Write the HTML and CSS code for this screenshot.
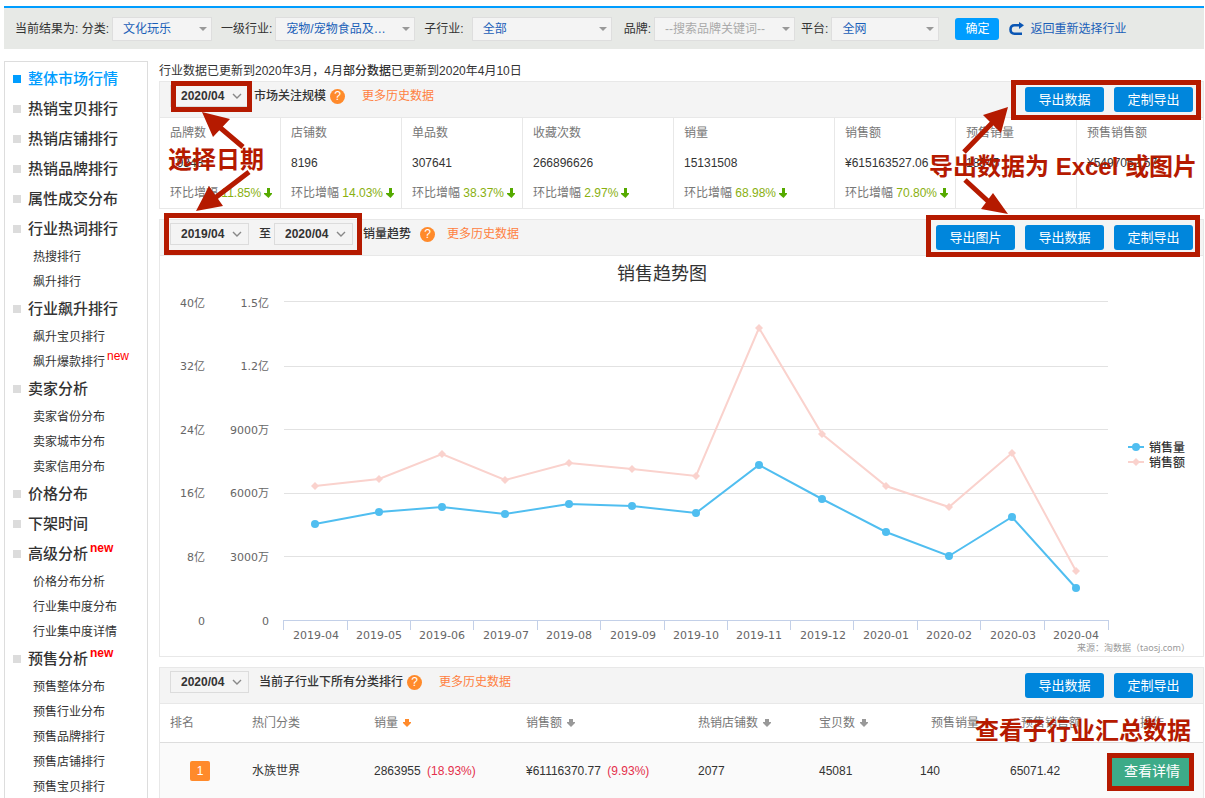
FILE: index.html
```html
<!DOCTYPE html>
<html lang="zh-CN">
<head>
    <title>整体市场行情</title>
    <meta charset="utf-8">
    <meta name="viewport" content="width=device-width, initial-scale=1">

    <link rel="stylesheet" href="styles.css">
</head>

<body>
    <!-- shared icons -->
    <svg class="defs" aria-hidden="true">
        <symbol id="down" viewBox="0 0 8 10"><path d="M3 0h3v5h2v1L4.500 10 0 6V5h3z"/></symbol>
        <symbol id="sort" viewBox="0 0 8 8"><path d="M2 0h4v3h2v1L4 8 0 4V3h2z"/></symbol>
    </svg>

    <form class="filter">
        <label for="cat">当前结果为: 分类:</label>
        <select id="cat" class="f-cat"><option>文化玩乐</option></select>
        <label for="level1">一级行业:</label>
        <select id="level1" class="f-level1"><option>宠物/宠物食品及…</option></select>
        <label for="level2">子行业:</label>
        <select id="level2" class="f-level2"><option>全部</option></select>
        <label for="brand">品牌:</label>
        <input id="brand" class="f-brand" type="text" placeholder="--搜索品牌关键词--">
        <label for="platform">平台:</label>
        <select id="platform" class="f-platform"><option>全网</option></select>
        <button type="button" class="ok">确定</button>
        <a href="#" class="back">
            <svg width="15" height="14" viewBox="0 0 15 14"><path d="M13 11.700H5.500Q1.500 11.700 1.500 7.500T5.500 3.300H10" fill="none" stroke="#0a56b4" stroke-width="2.600"/><path d="M10 0l5 3.300L10 7z" fill="#0a56b4"/></svg>
            返回重新选择行业
        </a>
    </form>

    <div class="page">
        <nav class="side">
            <a href="#" class="item on">整体市场行情</a>
            <a href="#" class="item">热销宝贝排行</a>
            <a href="#" class="item">热销店铺排行</a>
            <a href="#" class="item">热销品牌排行</a>
            <a href="#" class="item">属性成交分布</a>
            <a href="#" class="item">行业热词排行</a>
            <a href="#" class="sub">热搜排行</a>
            <a href="#" class="sub">飙升排行</a>
            <a href="#" class="item">行业飙升排行</a>
            <a href="#" class="sub">飙升宝贝排行</a>
            <a href="#" class="sub">飙升爆款排行<em>new</em></a>
            <a href="#" class="item">卖家分析</a>
            <a href="#" class="sub">卖家省份分布</a>
            <a href="#" class="sub">卖家城市分布</a>
            <a href="#" class="sub">卖家信用分布</a>
            <a href="#" class="item">价格分布</a>
            <a href="#" class="item">下架时间</a>
            <a href="#" class="item">高级分析<em>new</em></a>
            <a href="#" class="sub">价格分布分析</a>
            <a href="#" class="sub">行业集中度分布</a>
            <a href="#" class="sub">行业集中度详情</a>
            <a href="#" class="item">预售分析<em>new</em></a>
            <a href="#" class="sub">预售整体分布</a>
            <a href="#" class="sub">预售行业分布</a>
            <a href="#" class="sub">预售品牌排行</a>
            <a href="#" class="sub">预售店铺排行</a>
            <a href="#" class="sub">预售宝贝排行</a>
        </nav>

        <main>
            <p class="notice">行业数据已更新到2020年3月，4月<b>部分数据</b>已更新到2020年4月10日</p>

            <section class="panel">
                <header class="head">
                    <div class="tools tight">
                        <select class="date" aria-label="月份"><option>2020/04</option></select>
                        <h2>市场关注规模</h2>
                        <span class="help">?</span>
                        <a href="#" class="more">更多历史数据</a>
                    </div>
                    <div class="btns">
                        <button type="button">导出数据</button>
                        <button type="button">定制导出</button>
                    </div>
                </header>
                <div class="stats">
                    <div class="stat">
                        <span>品牌数</span><strong>19348</strong>
                        <span>环比增幅 <i>11.85%</i><svg><use href="#down"/></svg></span>
                    </div>
                    <div class="stat">
                        <span>店铺数</span><strong>8196</strong>
                        <span>环比增幅 <i>14.03%</i><svg><use href="#down"/></svg></span>
                    </div>
                    <div class="stat">
                        <span>单品数</span><strong>307641</strong>
                        <span>环比增幅 <i>38.37%</i><svg><use href="#down"/></svg></span>
                    </div>
                    <div class="stat">
                        <span>收藏次数</span><strong>266896626</strong>
                        <span>环比增幅 <i>2.97%</i><svg><use href="#down"/></svg></span>
                    </div>
                    <div class="stat">
                        <span>销量</span><strong>15131508</strong>
                        <span>环比增幅 <i>68.98%</i><svg><use href="#down"/></svg></span>
                    </div>
                    <div class="stat">
                        <span>销售额</span><strong>¥615163527.06</strong>
                        <span>环比增幅 <i>70.80%</i><svg><use href="#down"/></svg></span>
                    </div>
                    <div class="stat">
                        <span>预售销量</span><strong>18545</strong>
                    </div>
                    <div class="stat">
                        <span>预售销售额</span><strong>¥5497052.57</strong>
                    </div>
                </div>
            </section>

            <section class="panel">
                <header class="head">
                    <div class="tools wide">
                        <select class="date" aria-label="开始月份"><option>2019/04</option></select>
                        <span class="to">至</span>
                        <select class="date" aria-label="结束月份"><option>2020/04</option></select>
                        <h2>销量趋势</h2>
                        <span class="help">?</span>
                        <a href="#" class="more">更多历史数据</a>
                    </div>
                    <div class="btns">
                        <button type="button">导出图片</button>
                        <button type="button">导出数据</button>
                        <button type="button">定制导出</button>
                    </div>
                </header>

                <svg class="chart" viewBox="0 0 1043 400">
                    <defs>
                        <marker id="dot" markerUnits="userSpaceOnUse" markerWidth="8" markerHeight="8" refX="4" refY="4"><circle cx="4" cy="4" r="4" fill="#50bef0"/></marker>
                        <marker id="diamond" markerUnits="userSpaceOnUse" markerWidth="8" markerHeight="8" refX="4" refY="4"><path d="M4 0l4 4-4 4-4-4z" fill="#fad2cd"/></marker>
                    </defs>
                    <text class="title" x="502" y="24">销售趋势图</text>

                    <path class="grid" d="M124 45.500h824M124 110.500h824M124 173.500h824M124 237.500h824M124 300.500h824"/>
                    <path class="axis" d="M123 364.500h825M123.500 364v10M187.500 364v10M250.500 364v10M313.500 364v10M377.500 364v10M440.500 364v10M504.500 364v10M567.500 364v10M630.500 364v10M693.500 364v10M757.500 364v10M820.500 364v10M884.500 364v10M948.500 364v10"/>

                    <g class="ylab">
                        <text x="45" y="51">40亿</text><text x="109" y="51">1.5亿</text>
                        <text x="45" y="114">32亿</text><text x="109" y="114">1.2亿</text>
                        <text x="45" y="178">24亿</text><text x="109" y="178">9000万</text>
                        <text x="45" y="241">16亿</text><text x="109" y="241">6000万</text>
                        <text x="45" y="305">8亿</text><text x="109" y="305">3000万</text>
                        <text x="45" y="369">0</text><text x="109" y="369">0</text>
                    </g>
                    <g class="xlab">
                        <text x="156" y="383">2019-04</text>
                        <text x="219" y="383">2019-05</text>
                        <text x="282" y="383">2019-06</text>
                        <text x="346" y="383">2019-07</text>
                        <text x="409" y="383">2019-08</text>
                        <text x="473" y="383">2019-09</text>
                        <text x="536" y="383">2019-10</text>
                        <text x="599" y="383">2019-11</text>
                        <text x="663" y="383">2019-12</text>
                        <text x="726" y="383">2020-01</text>
                        <text x="789" y="383">2020-02</text>
                        <text x="853" y="383">2020-03</text>
                        <text x="916" y="383">2020-04</text>
                    </g>

                    <polyline class="volume" points="155,268 219,256 282,251 345,258 409,248 472,250 536,257 599,209 662,243 726,276 789,300 852,261 916,332"/>
                    <polyline class="amount" points="155,230 219,223 282,198 345,224 409,207 472,213 536,220 599,72 662,178 726,230 789,251 852,197 916,315"/>

                    <polyline class="volume key" points="968,191 976,191 984,191"/>
                    <polyline class="amount key" points="968,206 976,206 984,206"/>
                    <text class="legend" x="989" y="196">销售量</text>
                    <text class="legend" x="989" y="211">销售额</text>
                    <text class="source" x="1030" y="395">来源：淘数据（taosj.com）</text>
                </svg>
            </section>

            <section class="panel">
                <header class="head">
                    <div class="tools">
                        <select class="date" aria-label="月份"><option>2020/04</option></select>
                        <h2>当前子行业下所有分类排行</h2>
                        <span class="help">?</span>
                        <a href="#" class="more">更多历史数据</a>
                    </div>
                    <div class="btns">
                        <button type="button">导出数据</button>
                        <button type="button">定制导出</button>
                    </div>
                </header>
                <table class="rank">
                    <colgroup>
                        <col class="c1"><col class="c2"><col class="c3"><col class="c4"><col class="c5"><col class="c6"><col class="c7"><col class="c8"><col class="c9">
                    </colgroup>
                    <thead>
                        <tr>
                            <th>排名</th>
                            <th>热门分类</th>
                            <th>销量<svg class="active"><use href="#sort"/></svg></th>
                            <th>销售额<svg><use href="#sort"/></svg></th>
                            <th>热销店铺数<svg><use href="#sort"/></svg></th>
                            <th>宝贝数<svg><use href="#sort"/></svg></th>
                            <th class="in">预售销量</th>
                            <th class="in">预售销售额</th>
                            <th class="op">操作</th>
                        </tr>
                    </thead>
                    <tbody>
                        <tr>
                            <td class="no"><span>1</span></td>
                            <td>水族世界</td>
                            <td>2863955 <i>(18.93%)</i></td>
                            <td>¥61116370.77 <i>(9.93%)</i></td>
                            <td>2077</td>
                            <td>45081</td>
                            <td>140</td>
                            <td>65071.42</td>
                            <td class="op"><button type="button" class="detail">查看详情</button></td>
                        </tr>
                    </tbody>
                </table>
                <svg class="note note-detail" width="240" height="130">
                    <rect x="146.500" y="87.500" width="82" height="33"/>
                    <text x="12" y="71">查看子行业汇总数据</text>
                </svg>
            </section>

            <svg class="note note-date" width="210" height="200">
                <rect x="14.500" y="22.500" width="76" height="26"/>
                <rect x="7.500" y="154.500" width="193" height="37"/>
                <path class="line" d="M84 86L58 64M90 111L52 140"/>
                <path d="M43 51l28 7-17 18zM37 150l13-25 14 20z"/>
                <text x="9" y="107">选择日期</text>
            </svg>
            <svg class="note note-export" width="280" height="200">
                <rect x="89.500" y="21.500" width="185" height="35"/>
                <rect x="4.500" y="156.500" width="269" height="37"/>
                <path class="line" d="M40 91L70 60M41 119L66 142"/>
                <path d="M84 46l-25 8 18 18zM84 153l-15-21-12 16z"/>
                <text x="5" y="114">导出数据为 Excel 或图片</text>
            </svg>
        </main>
    </div>
</body>
</html>
```
FILE: styles.css
```css
:root {
    --blue: #009dff;
    --btn: #0086dc;
    --link: #1a5fb8;
    --orange: #ff8a2b;
    --line: #e8e8e8;
    --note: #b51a00;
}

* {
    box-sizing: border-box;
}
body {
    margin: 0;
    padding: 6px 1px 0 4px;
    height: 100vh;
    overflow: hidden;
    color: #333;
    font: 12px/20px "Liberation Sans", "Noto Sans CJK SC", sans-serif;
    background-color: #fff;
}
a {
    color: inherit;
    text-decoration: none;
}
button, select, input {
    font: inherit;
    margin: 0;
    border-radius: 0;
}
i, em {
    font-style: normal;
}
.defs {
    position: absolute;
    width: 0;
    height: 0;
}

/* filter bar */
.filter {
    display: flex;
    align-items: center;
    height: 43px;
    padding-left: 11px;
    border-top: 2px solid var(--blue);
    background-color: #e7e9e6;
    white-space: nowrap;
}
.filter select, .filter input {
    appearance: none;
    height: 24px;
    margin: 0 9px 0 3px;
    padding: 1px 16px 0 10px;
    border: 1px solid #dedede;
    color: var(--link);
    background: #f4f4f4 url("data:image/svg+xml,%3Csvg xmlns='http://www.w3.org/2000/svg' width='8' height='4'%3E%3Cpath d='M0 0h8L4 4z' fill='%23999'/%3E%3C/svg%3E") no-repeat right 4px center;
}
.filter input::placeholder {
    color: #aaa;
}
.filter .f-cat { width: 100px; }
.filter .f-level1 { width: 140px; }
.filter .f-level2 { width: 140px; margin: 0 12px 0 8px; }
.filter .f-brand { width: 141px; margin-right: 6px; }
.filter .f-platform { width: 108px; margin-right: 16px; }
.ok {
    width: 44px;
    height: 22px;
    padding: 0;
    border: 0;
    border-radius: 3px;
    color: #fff;
    background-color: var(--blue);
}
.back {
    display: flex;
    align-items: center;
    gap: 6px;
    margin-left: 10px;
    color: var(--link);
}

/* layout */
.page {
    display: flex;
    align-items: flex-start;
    gap: 11px;
    margin-top: 12px;
}
main {
    position: relative;
    flex: 1;
    min-width: 0;
}

/* left menu */
.side {
    flex: none;
    width: 144px;
    padding: 2px 0 20px;
    border: 1px solid #ddd;
}
.side a {
    display: flex;
    align-items: center;
}
.item {
    height: 30px;
    padding-left: 8px;
    font-size: 15px;
    font-weight: 500;
}
.item::before {
    content: "";
    width: 8px;
    height: 8px;
    margin-right: 7px;
    background-color: #dcdcdc;
}
.side .on {
    color: var(--blue);
}
.on::before {
    background-color: var(--blue);
}
.sub {
    height: 25px;
    padding-left: 28px;
}
.side em {
    padding: 0 0 12px 2px;
    font-size: 12px;
    color: #f00;
}
.item em {
    font-weight: bold;
}

/* panels */
.notice {
    margin: 0;
}
.notice b {
    font-weight: 500;
}
.panel {
    position: relative;
    margin-bottom: 10px;
    border: 1px solid var(--line);
}
.head {
    display: flex;
    justify-content: space-between;
    height: 36px;
    padding: 0 10px;
    border-bottom: 1px solid var(--line);
    background-color: #f4f4f4;
}
.tools {
    display: flex;
    align-items: center;
    height: 22px;
    margin-top: 3px;
}
.date {
    appearance: none;
    width: 79px;
    height: 22px;
    padding: 0 0 0 10px;
    border: 1px solid #dcdcdc;
    font-weight: bold;
    color: #333;
    background: #f4f4f4 url("data:image/svg+xml,%3Csvg xmlns='http://www.w3.org/2000/svg' width='10' height='6'%3E%3Cpath d='M1 1l4 4 4-4' fill='none' stroke='%23888' stroke-width='1.400'/%3E%3C/svg%3E") no-repeat right 6px center;
}
.head h2 {
    margin: 0 4px 0 10px;
    font-size: 12px;
    font-weight: 500;
}
.tight h2 {
    margin-left: 5px;
}
.wide h2 {
    margin-right: 9px;
}
.to {
    margin: 0 3px 0 10px;
    font-weight: 500;
}
.help {
    width: 15px;
    height: 15px;
    border-radius: 50%;
    line-height: 15px;
    text-align: center;
    color: #fff;
    background-color: var(--orange);
}
.more {
    margin-left: 17px;
    color: #ff8040;
}
.wide .more {
    margin-left: 12px;
}
.btns {
    display: flex;
    gap: 10px;
    margin-top: 5px;
}
.btns button {
    width: 79px;
    height: 25px;
    padding: 0;
    border: 0;
    border-radius: 3px;
    font-size: 13px;
    color: #fff;
    background-color: var(--btn);
}

/* numbers */
.stats {
    display: grid;
    grid-template-columns: 120fr 121fr 121fr 151fr 161fr 121fr 121fr 127fr;
}
.stat {
    height: 90px;
    padding-left: 10px;
    line-height: 30px;
    white-space: nowrap;
    color: #777;
}
.stat + .stat {
    border-left: 1px solid var(--line);
}
.stat span, .stat strong {
    display: block;
}
.stat strong {
    font-weight: normal;
    color: #333;
}
.stat i {
    color: #89b010;
}
.stat svg {
    width: 8px;
    height: 10px;
    margin-left: 3px;
    vertical-align: -1px;
    fill: #55aa00;
}

/* chart */
.chart {
    display: block;
    width: 100%;
    font-family: "DejaVu Sans", "Noto Sans CJK SC", sans-serif;
    font-size: 11px;
    fill: #666;
}
.title {
    font-size: 18px;
    fill: #333;
    text-anchor: middle;
}
.grid, .axis {
    fill: none;
    stroke: #e2e2e2;
}
.axis {
    stroke: #c3d0e8;
}
.ylab {
    text-anchor: end;
}
.xlab {
    text-anchor: middle;
}
.volume, .amount {
    fill: none;
    stroke-width: 2;
    stroke: #50bef0;
    marker: url(#dot);
}
.amount {
    stroke: #fad2cd;
    marker: url(#diamond);
}
.key {
    marker-start: none;
    marker-end: none;
}
.legend {
    font-size: 12px;
    font-weight: 500;
    fill: #333;
}
.source {
    font-family: "Noto Sans", "Noto Sans CJK SC", sans-serif;
    font-size: 9px;
    fill: #999;
    text-anchor: end;
}

/* ranking */
.rank {
    width: 100%;
    table-layout: fixed;
    border-collapse: collapse;
    white-space: nowrap;
}
.c1 { width: 82px; }
.c2 { width: 122px; }
.c3 { width: 152px; }
.c4 { width: 172px; }
.c5 { width: 121px; }
.c6 { width: 101px; }
.c7 { width: 90px; }
.c8 { width: 101px; }
.c9 { width: 102px; }
.rank th {
    height: 38px;
    padding: 0 0 0 10px;
    border-bottom: 1px solid #ddd;
    font-weight: normal;
    text-align: left;
    color: #777;
}
.rank th.in {
    padding-left: 21px;
}
.rank th svg {
    width: 8px;
    height: 8px;
    margin-left: 5px;
    fill: #999;
}
.rank th .active {
    fill: var(--orange);
}
.rank td {
    height: 58px;
    padding: 0 0 0 10px;
    background-color: #fafafa;
}
.rank td i {
    margin-left: 3px;
    color: #e4304c;
}
.rank .op {
    padding: 0;
    text-align: center;
}
.no span {
    display: block;
    width: 20px;
    height: 20px;
    margin-left: 20px;
    border-radius: 2px;
    text-align: center;
    color: #fff;
    background-color: var(--orange);
}
.detail {
    width: 80px;
    height: 30px;
    padding: 0;
    border: 0;
    font-size: 14px;
    color: #fff;
    background-color: #3dab88;
}

/* red marks on top of the page */
.note {
    position: absolute;
    top: 0;
    font-size: 24px;
    font-weight: bold;
    fill: var(--note);
    pointer-events: none;
}
.note rect {
    fill: none;
    stroke: var(--note);
    stroke-width: 5;
}
.note .line {
    stroke: var(--note);
    stroke-width: 5;
}
.note-date {
    left: 0;
}
.note-export, .note-detail {
    right: 0;
}
```
